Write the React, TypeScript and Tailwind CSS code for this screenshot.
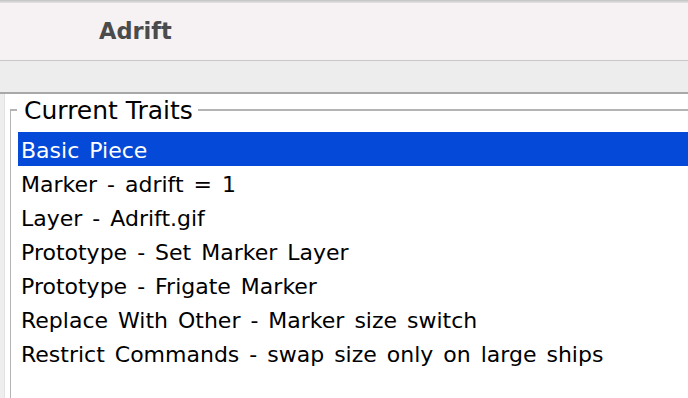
const traits = [
  "Basic Piece",
  "Marker - adrift = 1",
  "Layer - Adrift.gif",
  "Prototype - Set Marker Layer",
  "Prototype - Frigate Marker",
  "Replace With Other - Marker size switch",
  "Restrict Commands - swap size only on large ships",
];

export default function App() {
  const selected = 0;
  return (
    <div className="w-full h-[398px] overflow-hidden bg-white flex flex-col font-['DejaVu_Sans',sans-serif]">
      <div className="h-[3px] bg-gradient-to-b from-[#c2c2c2] to-[#e4e4e4]" />
      <div className="h-[58px] bg-[#f6f2f3] border-b border-[#c8c8c8] flex items-center pl-[99px]">
        <span className="text-[22.5px] font-bold text-[#4b4b4b] leading-none">Adrift</span>
      </div>
      <div className="h-[33px] bg-[#ededed] border-b-2 border-[#a8a8a8]" />
      <div className="flex flex-1">
        <div className="w-[5px] bg-[#eeeeee] border-r border-[#e2e2e2]" />
        <div className="flex-1 flex flex-col pl-[5px] pt-px">
          <div className="flex items-start h-[37px]">
            <div className="w-[7px] h-[23px] mt-[14px] border-t-2 border-l border-[#b4b4b4]" />
            <span className="text-[25px] leading-[28px] text-black pl-[7px] pr-[5px] mt-[2px]">Current Traits</span>
            <div className="flex-1 h-[2px] mt-[14px] bg-[#b4b4b4]" />
          </div>
          <div className="flex-1 border-l border-[#b4b4b4] pl-[7px]">
            <ul className="[word-spacing:3px]">
              {traits.map((t, i) => (
                <li
                  key={t}
                  className={
                    "h-[34px] pt-[3px] leading-[31px] pl-[3px] text-[22px] whitespace-nowrap " +
                    (i === selected ? "bg-[#0549d8] text-white" : "text-black")
                  }
                >
                  {t}
                </li>
              ))}
            </ul>
          </div>
        </div>
      </div>
    </div>
  );
}
